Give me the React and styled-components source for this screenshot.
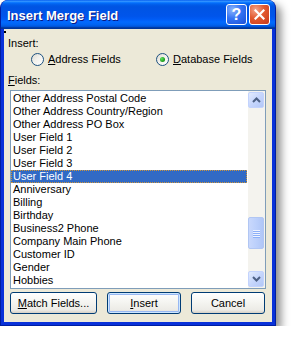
import React from "react";
import styled, { createGlobalStyle, css } from "styled-components";

const GlobalStyle = createGlobalStyle`
  html, body { margin: 0; padding: 0; background: #ffffff; }
  body { font-family: "Liberation Sans", Arial, sans-serif; font-size: 11px; color: #000; }
  * { box-sizing: border-box; }
`;

const Win = styled.div`
  width: 276px;
  height: 326px;
  display: flex;
  flex-direction: column;
  background: #0831d9;
  border: 1px solid #001ea0;
  border-top: none;
  border-radius: 8px 8px 0 0;
  box-shadow: 5px 5px 9px rgba(0, 0, 0, 0.45);
  overflow: hidden;
`;

const TitleBar = styled.div`
  height: 29px;
  flex: none;
  display: flex;
  align-items: center;
  padding: 0 5px 0 6px;
  background: linear-gradient(
    to bottom,
    #0058ee 0%,
    #3593ff 4%,
    #288eff 6%,
    #127dff 8%,
    #036ffc 10%,
    #0262ee 14%,
    #0057e5 20%,
    #0054e3 24%,
    #0055eb 56%,
    #005bf5 66%,
    #026afe 76%,
    #0062ef 86%,
    #0052d6 92%,
    #0040ab 94%,
    #003092 100%
  );
`;

const Title = styled.div`
  flex: 1;
  color: #fff;
  font-family: "Liberation Sans", Arial, sans-serif;
  font-weight: bold;
  font-size: 13px;
  text-shadow: 1px 1px 0 #0a1883;
  padding-top: 1px;
`;

const CapButton = styled.div`
  width: 21px;
  height: 21px;
  border: 1px solid #fff;
  border-radius: 3px;
  display: flex;
  align-items: center;
  justify-content: center;
  color: #fff;
  font-weight: bold;
  font-size: 16px;
  margin-left: 2px;
  ${(p) =>
    p.$kind === "close"
      ? css`
          background: radial-gradient(circle at 30% 25%, #f5a48a 0%, #e2592f 45%, #c8391b 100%);
        `
      : css`
          background: radial-gradient(circle at 30% 25%, #8cb5fb 0%, #3474f4 45%, #1c4fd6 100%);
        `}
`;

const Client = styled.div`
  position: relative;
  flex: 1;
  margin: 0 3px 3px;
  background: #ece9d8;
  padding: 8px 6px 8px 4px;
  display: flex;
  flex-direction: column;
`;

const Dot = styled.div`
  position: absolute;
  left: 0;
  top: 2px;
  width: 2px;
  height: 2px;
  background: #000;
`;

const Label = styled.div`
  height: 13px;
  line-height: 13px;
  margin-bottom: ${(p) => p.$mb || 0}px;
`;

const RadioRow = styled.div`
  height: 13px;
  display: grid;
  grid-template-columns: 125px auto;
  margin: 3px 0 8px 23px;
`;

const RadioItem = styled.label`
  display: flex;
  align-items: center;
  gap: 4px;
  line-height: 13px;
`;

const RadioCircle = styled.span`
  width: 13px;
  height: 13px;
  border-radius: 50%;
  border: 1px solid #1c5180;
  background: linear-gradient(135deg, #dcd9cf 0%, #f2f1ec 45%, #ffffff 100%);
  display: flex;
  align-items: center;
  justify-content: center;
  &::after {
    content: "";
    display: ${(p) => (p.$checked ? "block" : "none")};
    width: 5px;
    height: 5px;
    border-radius: 50%;
    background: radial-gradient(circle at 35% 35%, #5fe35f 0%, #21a121 60%, #137c13 100%);
  }
`;

const ListBox = styled.div`
  margin: 3px 0 0 2px;
  height: 199px;
  border: 1px solid #7f9db9;
  background: #fff;
  display: flex;
`;

const Rows = styled.div`
  flex: 1;
  padding: 1px 0;
  overflow: hidden;
`;

const Row = styled.div`
  height: 13px;
  line-height: 13px;
  padding-left: 2px;
  white-space: nowrap;
  ${(p) =>
    p.$selected &&
    css`
      background: #316ac5;
      color: #fff;
      outline: 1px dotted #ce953a;
      outline-offset: -1px;
      margin-right: 1px;
    `}
`;

const ScrollBar = styled.div`
  width: 17px;
  background: #f4f3ee;
  display: flex;
  flex-direction: column;
  padding: 1px 1px 1px 0;
`;

const ScrollBtn = styled.div`
  height: 16px;
  flex: none;
  border: 1px solid #c3d3fd;
  border-radius: 2px;
  background: linear-gradient(135deg, #e2ebfe 0%, #c6d6fc 50%, #b2c7f7 100%);
  display: flex;
  align-items: center;
  justify-content: center;
`;

const Track = styled.div`
  flex: 1;
  display: flex;
  flex-direction: column;
`;

const Thumb = styled.div`
  height: 32px;
  border: 1px solid #b1c6f3;
  border-radius: 2px;
  background: linear-gradient(90deg, #c9d8fc 0%, #bcd0fb 50%, #b0c6f7 100%);
  display: flex;
  flex-direction: column;
  align-items: center;
  justify-content: center;
  gap: 1px;
`;

const Grip = styled.span`
  width: 7px;
  height: 1px;
  background: #eef3ff;
  box-shadow: 0 1px 0 #8cb0f8;
`;

const ButtonRow = styled.div`
  display: flex;
  gap: 10px;
  margin: 3px 0 0 2px;
`;

const Button = styled.div`
  width: ${(p) => p.$w}px;
  height: 22px;
  border: 1px solid #003c74;
  border-radius: 3px;
  display: flex;
  align-items: center;
  justify-content: center;
  background: linear-gradient(to bottom, #ffffff 0%, #f5f5f1 45%, #ecebe6 85%, #d6d0c5 100%);
  ${(p) =>
    p.$default &&
    css`
      box-shadow: inset 0 0 0 1px #cee7ff, inset 0 0 0 2px #98b8f2;
    `}
`;

const items = [
  "Other Address Postal Code",
  "Other Address Country/Region",
  "Other Address PO Box",
  "User Field 1",
  "User Field 2",
  "User Field 3",
  "User Field 4",
  "Anniversary",
  "Billing",
  "Birthday",
  "Business2 Phone",
  "Company Main Phone",
  "Customer ID",
  "Gender",
  "Hobbies",
];

const Arrow = ({ up }) => (
  <svg width="9" height="6" viewBox="0 0 9 6">
    <path
      d={up ? "M1 5 L4.5 1.5 L8 5" : "M1 1 L4.5 4.5 L8 1"}
      fill="none"
      stroke="#4d6185"
      strokeWidth="2"
    />
  </svg>
);

export default function App() {
  return (
    <>
      <GlobalStyle />
      <Win>
        <TitleBar>
          <Title>Insert Merge Field</Title>
          <CapButton $kind="help">?</CapButton>
          <CapButton $kind="close">
            <svg width="11" height="11" viewBox="0 0 11 11">
              <path d="M1.5 1.5 L9.5 9.5 M9.5 1.5 L1.5 9.5" stroke="#fff" strokeWidth="2.2" strokeLinecap="square" />
            </svg>
          </CapButton>
        </TitleBar>
        <Client>
          <Dot />
          <Label>Insert:</Label>
          <RadioRow>
            <RadioItem>
              <RadioCircle />
              <span>
                <u>A</u>ddress Fields
              </span>
            </RadioItem>
            <RadioItem>
              <RadioCircle $checked />
              <span>
                <u>D</u>atabase Fields
              </span>
            </RadioItem>
          </RadioRow>
          <Label>
            <u>F</u>ields:
          </Label>
          <ListBox>
            <Rows>
              {items.map((t) => (
                <Row key={t} $selected={t === "User Field 4"}>
                  {t}
                </Row>
              ))}
            </Rows>
            <ScrollBar>
              <ScrollBtn>
                <Arrow up />
              </ScrollBtn>
              <Track>
                <Thumb style={{ marginTop: 109 }}>
                  <Grip />
                  <Grip />
                  <Grip />
                  <Grip />
                </Thumb>
              </Track>
              <ScrollBtn>
                <Arrow />
              </ScrollBtn>
            </ScrollBar>
          </ListBox>
          <ButtonRow>
            <Button $w={87}>
              <span>
                <u>M</u>atch Fields...
              </span>
            </Button>
            <Button $w={74} $default>
              <span>
                <u>I</u>nsert
              </span>
            </Button>
            <Button $w={74}>Cancel</Button>
          </ButtonRow>
        </Client>
      </Win>
    </>
  );
}
